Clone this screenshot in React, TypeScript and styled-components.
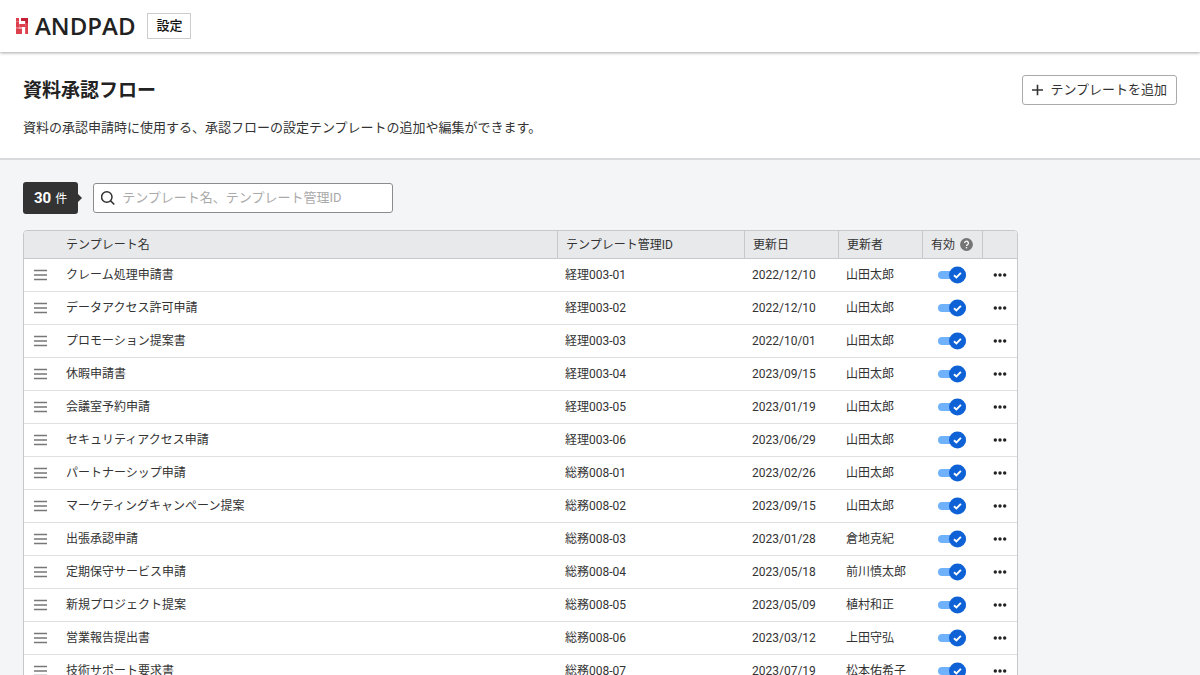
import React, { useState } from "react";
import styled, { createGlobalStyle } from "styled-components";

const GlobalStyle = createGlobalStyle`
  *, *::before, *::after { box-sizing: border-box; }
  body {
    margin: 0;
    background: #f4f5f7;
    color: #333;
    font-family: Roboto, "Noto Sans CJK JP", sans-serif;
    font-size: 13px;
    line-height: 20px;
  }
  button, input { font: inherit; color: inherit; }
`;

const TopBar = styled.header`
  position: relative;
  display: flex;
  align-items: center;
  gap: 12px;
  height: 52px;
  padding: 0 16px;
  background: #fff;
  box-shadow: 0 1px 3px rgba(0, 0, 0, 0.35);
`;

const Brand = styled.a`
  display: flex;
  align-items: center;
  gap: 7px;
  color: #222;
  font-family: "Open Sans", sans-serif;
  font-size: 24px;
  font-weight: 600;
  line-height: 28px;
  text-decoration: none;
`;

const SectionLink = styled.a`
  padding: 1px 8px;
  border: 1px solid #ccc;
  color: #111;
  font-weight: 500;
  line-height: 22px;
  text-decoration: none;
`;

const PageHead = styled.section`
  display: flex;
  justify-content: space-between;
  align-items: flex-start;
  padding: 23px 23px 20px;
  background: #fff;
  border-bottom: 2px solid #d9dadc;
`;

const Title = styled.h1`
  margin: 0;
  color: #222;
  font-size: 19px;
  font-weight: 700;
  line-height: 32px;
`;

const Lead = styled.p`
  margin: 11px 0 0;
`;

const AddButton = styled.button`
  display: flex;
  align-items: center;
  gap: 6px;
  height: 30px;
  padding: 0 9px;
  border: 1px solid #aaa;
  border-radius: 3px;
  background: #fff;
  cursor: pointer;
`;

const Content = styled.main`
  max-width: 1041px;
  padding: 22px 23px;
`;

const Toolbar = styled.div`
  display: flex;
  align-items: center;
  gap: 15px;
  margin-bottom: 16px;
`;

const CountBadge = styled.div`
  position: relative;
  display: flex;
  align-items: baseline;
  gap: 4px;
  height: 32px;
  padding: 6px 11px;
  border-radius: 3px;
  background: #333;
  color: #fff;
  font-size: 12px;
  line-height: 20px;

  strong { font-size: 15px; }

  &::after {
    content: "";
    position: absolute;
    top: 12px;
    left: 100%;
    border: 4px solid transparent;
    border-left-color: #333;
    border-right-width: 0;
  }
`;

const SearchBox = styled.label`
  display: flex;
  align-items: center;
  gap: 7px;
  width: 300px;
  height: 30px;
  padding: 0 7px;
  border: 1px solid #8c8c8c;
  border-radius: 3px;
  background: #fff;
`;

const SearchInput = styled.input`
  flex: 1;
  min-width: 0;
  padding: 0;
  border: 0;
  outline: 0;
  background: none;

  &::placeholder { color: #aaa; opacity: 1; }
`;

const TableFrame = styled.div`
  overflow: hidden;
  border: 1px solid #c6c8cb;
  border-radius: 4px;
  background: #fff;
`;

const Table = styled.table`
  width: 100%;
  border-collapse: separate;
  border-spacing: 0;
  table-layout: fixed;
  font-size: 12px;
`;

const Col = styled.col<{ $width?: number }>`
  width: ${(p) => (p.$width ? `${p.$width}px` : "auto")};
`;

const HeadCell = styled.th<{ $divided?: boolean }>`
  height: 28px;
  padding: 0 8px;
  border-bottom: 1px solid #c6c8cb;
  border-left: ${(p) => (p.$divided ? "1px solid #c6c8cb" : "0")};
  background: #e8e9eb;
  font-weight: 400;
  text-align: left;
  white-space: nowrap;
`;

const Cell = styled.td`
  height: 33px;
  padding: 0 8px;
  border-bottom: 1px solid #dfe0e2;
  white-space: nowrap;
`;

const HeadLabel = styled.span`
  display: flex;
  align-items: center;
  gap: 5px;
`;

const IconButton = styled.button`
  display: flex;
  width: fit-content;
  margin: 0 auto;
  padding: 0;
  border: 0;
  background: none;
  cursor: pointer;
`;

const Switch = styled.label`
  position: relative;
  display: flex;
  width: fit-content;
  margin-left: 8px;
  cursor: pointer;

  input {
    position: absolute;
    inset: 0;
    width: 100%;
    height: 100%;
    margin: 0;
    opacity: 0;
    cursor: pointer;
  }
`;

const BrandMark = () => (
  <svg width="12" height="16" viewBox="0 0 12 16" aria-hidden="true">
    <path fill="#f0a0a6" d="M0 0h3v6h6V3H5V0h7v16H9V9H6v7H0z" />
    <path fill="#dd3f4c" d="M0 0h3v3.6H0zM0 4.1h3V9H0zM3.4 6H9V9H3.4zM0 11h6v5H0zM0 9.4h3v1.2H0zM9.3 6H12V16H9.3z" />
    <path fill="#c41f35" d="M5 0H12v3.1H5zM9.3 3.1H12v2.6H9.3z" />
  </svg>
);

const PlusIcon = () => (
  <svg width="12" height="12" viewBox="0 0 12 12" aria-hidden="true">
    <path d="M5.5 .8v10.4M0 6h11" stroke="#333" strokeWidth="1.6" />
  </svg>
);

const SearchIcon = () => (
  <svg width="14" height="14" viewBox="0 0 14 14" fill="none" stroke="#333" strokeWidth="1.5" aria-hidden="true">
    <circle cx="5.8" cy="6" r="5.2" />
    <path d="M9.4 9.6l3.9 3.9" />
  </svg>
);

const HelpIcon = () => (
  <svg width="13" height="13" viewBox="0 0 13 13" fill="none" aria-hidden="true">
    <circle cx="6.5" cy="6.5" r="6.4" fill="#757575" />
    <path d="M4.6 5.1a1.9 1.9 0 1 1 2.9 1.6c-.7.4-1 .7-1 1.4" stroke="#fff" strokeWidth="1.3" />
    <circle cx="6.5" cy="9.8" r=".8" fill="#fff" />
  </svg>
);

const HandleIcon = () => (
  <svg width="14" height="12" viewBox="0 0 14 12" aria-hidden="true">
    <path d="M0 1.5h13M0 6h13M0 10.5h13" stroke="#777" strokeWidth="1.4" />
  </svg>
);

const MoreIcon = () => (
  <svg width="14" height="4" viewBox="0 0 14 4" fill="#222" aria-hidden="true">
    <circle cx="2.3" cy="2" r="1.7" />
    <circle cx="7" cy="2" r="1.7" />
    <circle cx="11.7" cy="2" r="1.7" />
  </svg>
);

const SwitchDrawing = ({ on }: { on: boolean }) => (
  <svg width="28" height="18" viewBox="0 0 28 18" fill="none" aria-hidden="true">
    <rect x="0" y="5" width="28" height="8" rx="4" fill={on ? "#6fb1fa" : "#c6c8cb"} />
    <circle cx={on ? 19.5 : 8.5} cy="9" r="8.5" fill={on ? "#0f62d6" : "#8c8c8c"} />
    {on && <path d="M16 9.2l2.4 2.3 4.5-4.6" stroke="#fff" strokeWidth="1.9" />}
  </svg>
);

type Template = { name: string; code: string; date: string; author: string };

const templates: Template[] = [
  { name: "クレーム処理申請書", code: "経理003-01", date: "2022/12/10", author: "山田太郎" },
  { name: "データアクセス許可申請", code: "経理003-02", date: "2022/12/10", author: "山田太郎" },
  { name: "プロモーション提案書", code: "経理003-03", date: "2022/10/01", author: "山田太郎" },
  { name: "休暇申請書", code: "経理003-04", date: "2023/09/15", author: "山田太郎" },
  { name: "会議室予約申請", code: "経理003-05", date: "2023/01/19", author: "山田太郎" },
  { name: "セキュリティアクセス申請", code: "経理003-06", date: "2023/06/29", author: "山田太郎" },
  { name: "パートナーシップ申請", code: "総務008-01", date: "2023/02/26", author: "山田太郎" },
  { name: "マーケティングキャンペーン提案", code: "総務008-02", date: "2023/09/15", author: "山田太郎" },
  { name: "出張承認申請", code: "総務008-03", date: "2023/01/28", author: "倉地克紀" },
  { name: "定期保守サービス申請", code: "総務008-04", date: "2023/05/18", author: "前川慎太郎" },
  { name: "新規プロジェクト提案", code: "総務008-05", date: "2023/05/09", author: "植村和正" },
  { name: "営業報告提出書", code: "総務008-06", date: "2023/03/12", author: "上田守弘" },
  { name: "技術サポート要求書", code: "総務008-07", date: "2023/07/19", author: "松本佑希子" },
];

const TemplateRow = ({ name, code, date, author }: Template) => {
  const [enabled, setEnabled] = useState(true);
  return (
    <tr>
      <Cell>
        <IconButton type="button" aria-label="並べ替え"><HandleIcon /></IconButton>
      </Cell>
      <Cell>{name}</Cell>
      <Cell>{code}</Cell>
      <Cell>{date}</Cell>
      <Cell>{author}</Cell>
      <Cell>
        <Switch>
          <input type="checkbox" aria-label="有効" checked={enabled} onChange={(e) => setEnabled(e.target.checked)} />
          <SwitchDrawing on={enabled} />
        </Switch>
      </Cell>
      <Cell>
        <IconButton type="button" aria-label="メニュー"><MoreIcon /></IconButton>
      </Cell>
    </tr>
  );
};

export default function App() {
  return (
    <>
      <GlobalStyle />
      <TopBar>
        <Brand href="#"><BrandMark />ANDPAD</Brand>
        <SectionLink href="#">設定</SectionLink>
      </TopBar>
      <PageHead>
        <div>
          <Title>資料承認フロー</Title>
          <Lead>資料の承認申請時に使用する、承認フローの設定テンプレートの追加や編集ができます。</Lead>
        </div>
        <AddButton type="button"><PlusIcon />テンプレートを追加</AddButton>
      </PageHead>
      <Content>
        <Toolbar>
          <CountBadge><strong>30</strong>件</CountBadge>
          <SearchBox>
            <SearchIcon />
            <SearchInput type="text" aria-label="検索" placeholder="テンプレート名、テンプレート管理ID" />
          </SearchBox>
        </Toolbar>
        <TableFrame>
          <Table>
            <colgroup>
              <Col $width={34} />
              <Col />
              <Col $width={187} />
              <Col $width={94} />
              <Col $width={84} />
              <Col $width={60} />
              <Col $width={35} />
            </colgroup>
            <thead>
              <tr>
                <HeadCell aria-label="並べ替え" />
                <HeadCell>テンプレート名</HeadCell>
                <HeadCell $divided>テンプレート管理ID</HeadCell>
                <HeadCell $divided>更新日</HeadCell>
                <HeadCell $divided>更新者</HeadCell>
                <HeadCell $divided><HeadLabel>有効<HelpIcon /></HeadLabel></HeadCell>
                <HeadCell $divided aria-label="メニュー" />
              </tr>
            </thead>
            <tbody>
              {templates.map((t) => <TemplateRow key={t.code} {...t} />)}
            </tbody>
          </Table>
        </TableFrame>
      </Content>
    </>
  );
}
